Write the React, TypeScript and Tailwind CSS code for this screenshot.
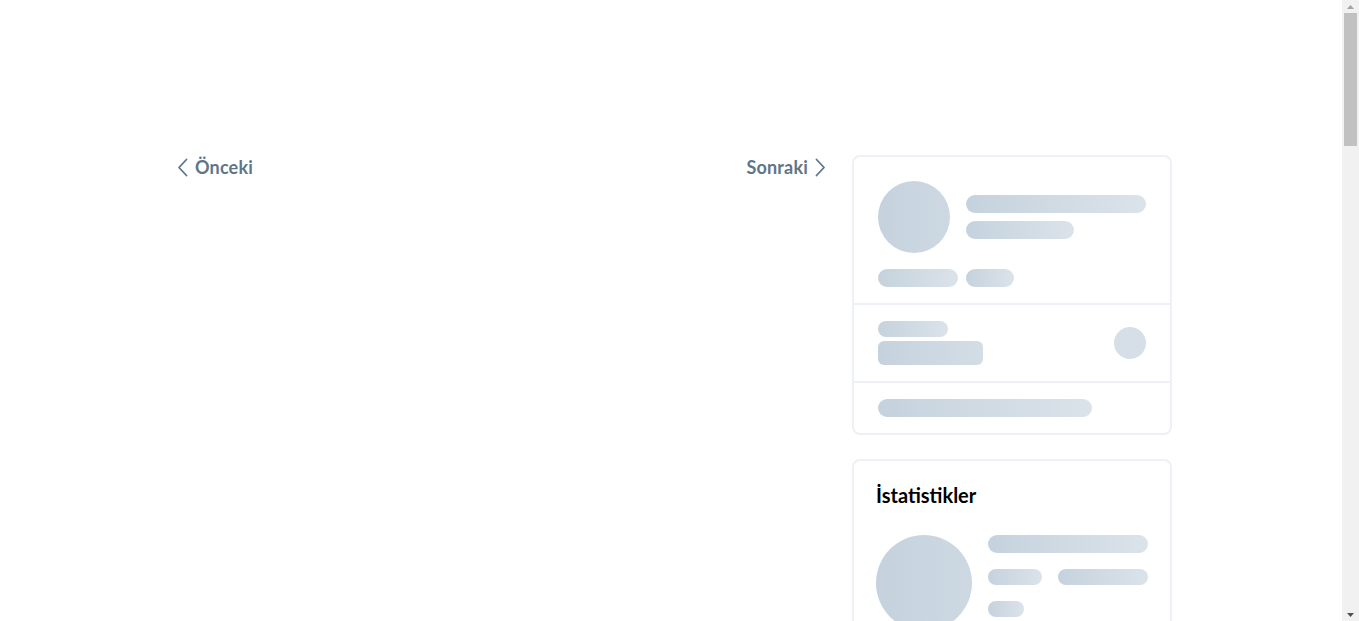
import React from "react";

const bar = "rounded-full bg-gradient-to-r from-[#c5d2dd] to-[#dbe3ea]";

function Chevron({ dir }: { dir: "left" | "right" }) {
  return (
    <svg width="11" height="19" viewBox="0 0 11 19" fill="none" className="shrink-0">
      <polyline
        points={dir === "left" ? "9.5,1.5 2,9.5 9.5,17.5" : "1.5,1.5 9,9.5 1.5,17.5"}
        stroke="#5f7588"
        strokeWidth="1.8"
        strokeLinecap="round"
        strokeLinejoin="round"
      />
    </svg>
  );
}

function ProfileSkeleton() {
  return (
    <div className="rounded-lg border-2 border-[#edf1f5] bg-white">
      <div className="px-6 pt-6 pb-4">
        <div className="flex items-center gap-4">
          <div className="h-[72px] w-[72px] shrink-0 rounded-full bg-gradient-to-r from-[#c5d2dd] to-[#cdd8e2]" />
          <div className="flex flex-col gap-2">
            <div className={`h-[18px] w-[180px] ${bar}`} />
            <div className={`h-[18px] w-[108px] ${bar}`} />
          </div>
        </div>
        <div className="mt-4 flex gap-2">
          <div className={`h-[18px] w-[80px] ${bar}`} />
          <div className={`h-[18px] w-[48px] ${bar}`} />
        </div>
      </div>
      <div className="flex items-center justify-between border-t-2 border-[#edf1f5] px-6 py-4">
        <div className="flex flex-col gap-1">
          <div className={`h-4 w-[70px] ${bar}`} />
          <div className="h-6 w-[105px] rounded-md bg-gradient-to-r from-[#c5d2dd] to-[#d3dde6]" />
        </div>
        <div className="h-8 w-8 rounded-full bg-[#d6dfe7]" />
      </div>
      <div className="border-t-2 border-[#edf1f5] px-6 py-4">
        <div className={`h-[18px] w-[214px] ${bar}`} />
      </div>
    </div>
  );
}

function StatsSkeleton() {
  return (
    <div className="mt-6 rounded-lg border-2 border-[#edf1f5] bg-white px-[22px] pt-[20px] pb-6">
      <h2 className="text-[20px] leading-7 font-bold text-black">İstatistikler</h2>
      <div className="mt-[26px] flex gap-4">
        <div className="h-24 w-24 shrink-0 rounded-full bg-gradient-to-r from-[#c5d2dd] to-[#cdd8e2]" />
        <div className="flex flex-col gap-4">
          <div className={`h-[18px] w-[160px] ${bar}`} />
          <div className="flex gap-4">
            <div className={`h-4 w-[54px] ${bar}`} />
            <div className={`h-4 w-[90px] ${bar}`} />
          </div>
          <div className={`h-4 w-9 ${bar}`} />
        </div>
      </div>
      <div className="mt-6 flex flex-col gap-3">
        <div className={`h-[18px] w-full ${bar}`} />
        <div className={`h-[18px] w-2/3 ${bar}`} />
      </div>
    </div>
  );
}

function Scrollbar() {
  return (
    <div className="flex h-full w-[17px] shrink-0 flex-col items-center bg-[#f1f1f1]">
      <div className="flex h-[13px] w-full items-center justify-center">
        <svg width="7" height="4" viewBox="0 0 7 4"><polygon points="3.5,0 7,4 0,4" fill="#a3a3a3" /></svg>
      </div>
      <div className="h-[133px] w-[13px] bg-[#c1c1c1]" />
      <div className="flex-1" />
      <div className="flex h-[13px] w-full items-center justify-center">
        <svg width="7" height="4" viewBox="0 0 7 4"><polygon points="0,0 7,0 3.5,4" fill="#505050" /></svg>
      </div>
    </div>
  );
}

export default function App() {
  return (
    <div className="flex h-screen overflow-hidden bg-white font-['Lato','Liberation_Sans',sans-serif]">
      <div className="h-full flex-1 overflow-hidden pl-[2px]">
        <div className="mx-auto flex w-[1000px] gap-6 pt-[155px]">
          <main className="flex-1">
            <nav className="-mt-px flex items-center justify-between text-[18px] font-bold tracking-[0.01em] text-[#5f7588]">
              <a href="#prev" className="flex items-center gap-[7px] pl-[5px]">
                <Chevron dir="left" />
                <span>Önceki</span>
              </a>
              <a href="#next" className="flex items-center gap-[7px] pr-[2px]">
                <span>Sonraki</span>
                <Chevron dir="right" />
              </a>
            </nav>
          </main>
          <aside className="w-[320px] shrink-0">
            <ProfileSkeleton />
            <StatsSkeleton />
          </aside>
        </div>
      </div>
      <Scrollbar />
    </div>
  );
}
